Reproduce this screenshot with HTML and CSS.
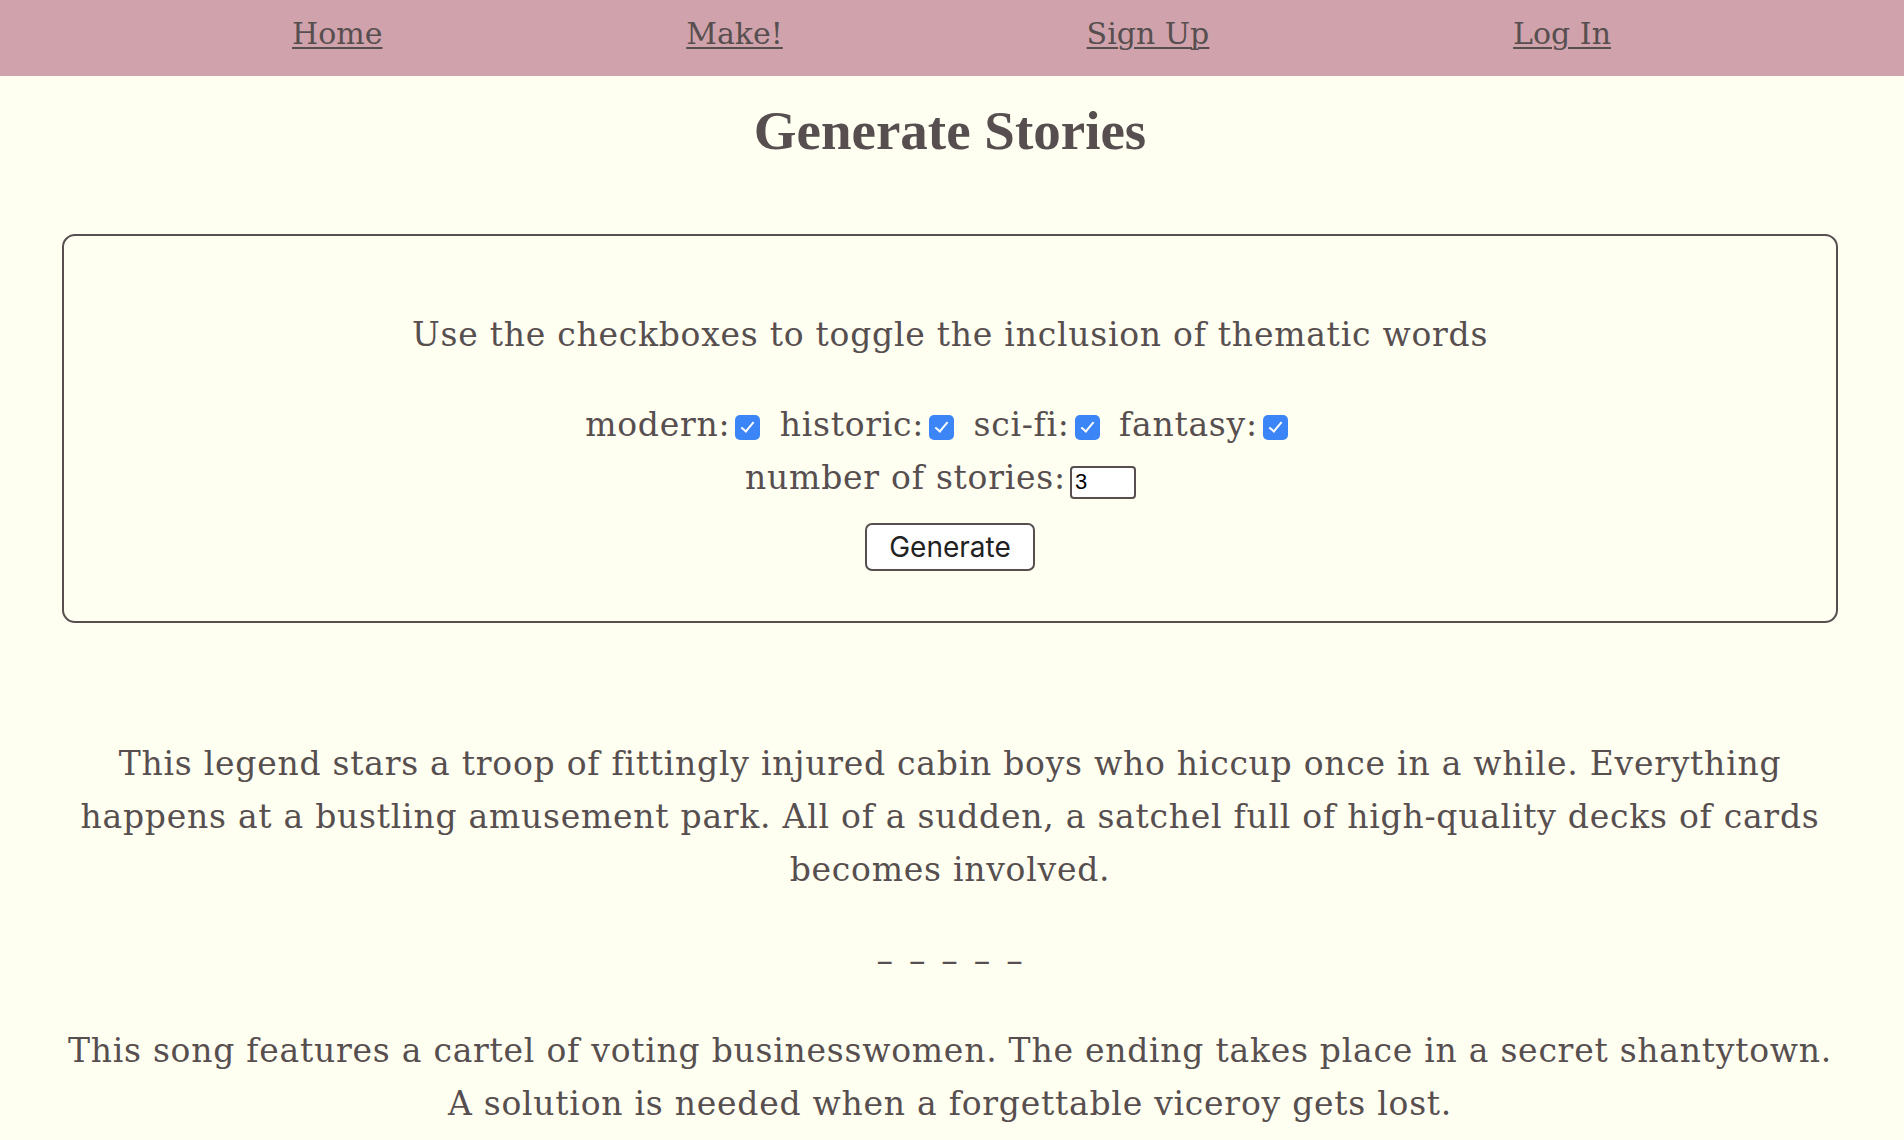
FILE: index.html
```html
<!DOCTYPE html>
<html lang="en">
<head>
<meta charset="utf-8">
<title>Generate Stories</title>
<link rel="stylesheet" href="styles.css">
</head>
<body>
<nav class="topnav">
  <a class="topnav-link" href="#">Home</a>
  <a class="topnav-link" href="#">Make!</a>
  <a class="topnav-link" href="#">Sign Up</a>
  <a class="topnav-link" href="#">Log In</a>
</nav>
<main class="page">
  <h1 class="page-title">Generate Stories</h1>
  <form class="panel">
    <p class="panel-intro">Use the checkboxes to toggle the inclusion of thematic words</p>
    <div class="panel-row">
      <label class="opt">modern:<input class="opt-check" type="checkbox" checked></label>
      <label class="opt">historic:<input class="opt-check" type="checkbox" checked></label>
      <label class="opt">sci-fi:<input class="opt-check" type="checkbox" checked></label>
      <label class="opt">fantasy:<input class="opt-check" type="checkbox" checked></label>
    </div>
    <div class="panel-row">
      <label class="opt">number of stories:<input class="opt-number" type="text" value="3"></label>
    </div>
    <button class="panel-button" type="button">Generate</button>
  </form>
  <section class="stories">
    <p class="story">This legend stars a troop of fittingly injured cabin boys who hiccup once in a while. Everything happens at a bustling amusement park. All of a sudden, a satchel full of high-quality decks of cards becomes involved.</p>
    <p class="story-divider">– – – – –</p>
    <p class="story">This song features a cartel of voting businesswomen. The ending takes place in a secret shantytown. A solution is needed when a forgettable viceroy gets lost.</p>
  </section>
</main>
</body>
</html>
```

FILE: styles.css
```css
* { box-sizing: border-box; }

html, body {
  margin: 0;
  padding: 0;
  background: #fefef1;
}

body {
  color: #574f4f;
  font-family: "DejaVu Serif", "Liberation Serif", serif;
  font-size: 33px;
  letter-spacing: 0.75px;
  line-height: 53px;
}

.topnav {
  height: 76px;
  background: #d0a3ac;
  display: flex;
  justify-content: space-between;
  align-items: flex-start;
  padding: 16px 293px 0 292px;
}

.topnav-link {
  color: #574f4f;
  font-size: 30px;
  letter-spacing: 0;
  line-height: normal;
  text-decoration: underline;
  text-underline-offset: 3px;
  text-decoration-thickness: 2px;
}

.page {
  padding: 0 66px 0 62px;
}

.page-title {
  margin: 23px 0 0;
  text-align: center;
  font-family: "Liberation Serif", serif;
  font-weight: bold;
  font-size: 55px;
  letter-spacing: 0;
  line-height: 64px;
  color: #574f4f;
}

.panel {
  margin-top: 71px;
  border: 2px solid #574f4f;
  border-radius: 13px;
  padding: 72px 20px 50px;
  text-align: center;
}

.panel-intro {
  margin: 0 0 37px;
}

.panel-row {
  margin: 0;
  padding-right: 19px;
}

.opt {
  white-space: nowrap;
}

.opt-check {
  appearance: none;
  -webkit-appearance: none;
  position: relative;
  width: 25px;
  height: 25px;
  margin: 0 8px 0 5px;
  border-radius: 5px;
  background: #3b85f6;
  vertical-align: -4px;
}

.opt-check::after {
  content: "";
  position: absolute;
  left: 9px;
  top: 4px;
  width: 5px;
  height: 11px;
  border-right: 2.5px solid #fff;
  border-bottom: 2.5px solid #fff;
  transform: rotate(40deg);
}

.opt-number {
  width: 66px;
  height: 33px;
  margin-left: 4px;
  padding: 0 3px;
  border: 2px solid #574f4f;
  border-radius: 4px;
  background: #fff;
  color: #000;
  font-family: "Liberation Sans", Arial, sans-serif;
  font-size: 22px;
  letter-spacing: 0;
}

.panel-button {
  display: block;
  margin: 19px auto 0;
  width: 170px;
  height: 48px;
  border: 2px solid #574f4f;
  border-radius: 7px;
  background: #fff;
  color: #222;
  font-family: Inter, "Liberation Sans", sans-serif;
  font-size: 28px;
  letter-spacing: 0;
  padding: 0;
}

.stories {
  margin-top: 114px;
  text-align: center;
}

.story {
  margin: 0;
}

.story-divider {
  margin: 38px 0 37px;
  word-spacing: 4px;
}
```
